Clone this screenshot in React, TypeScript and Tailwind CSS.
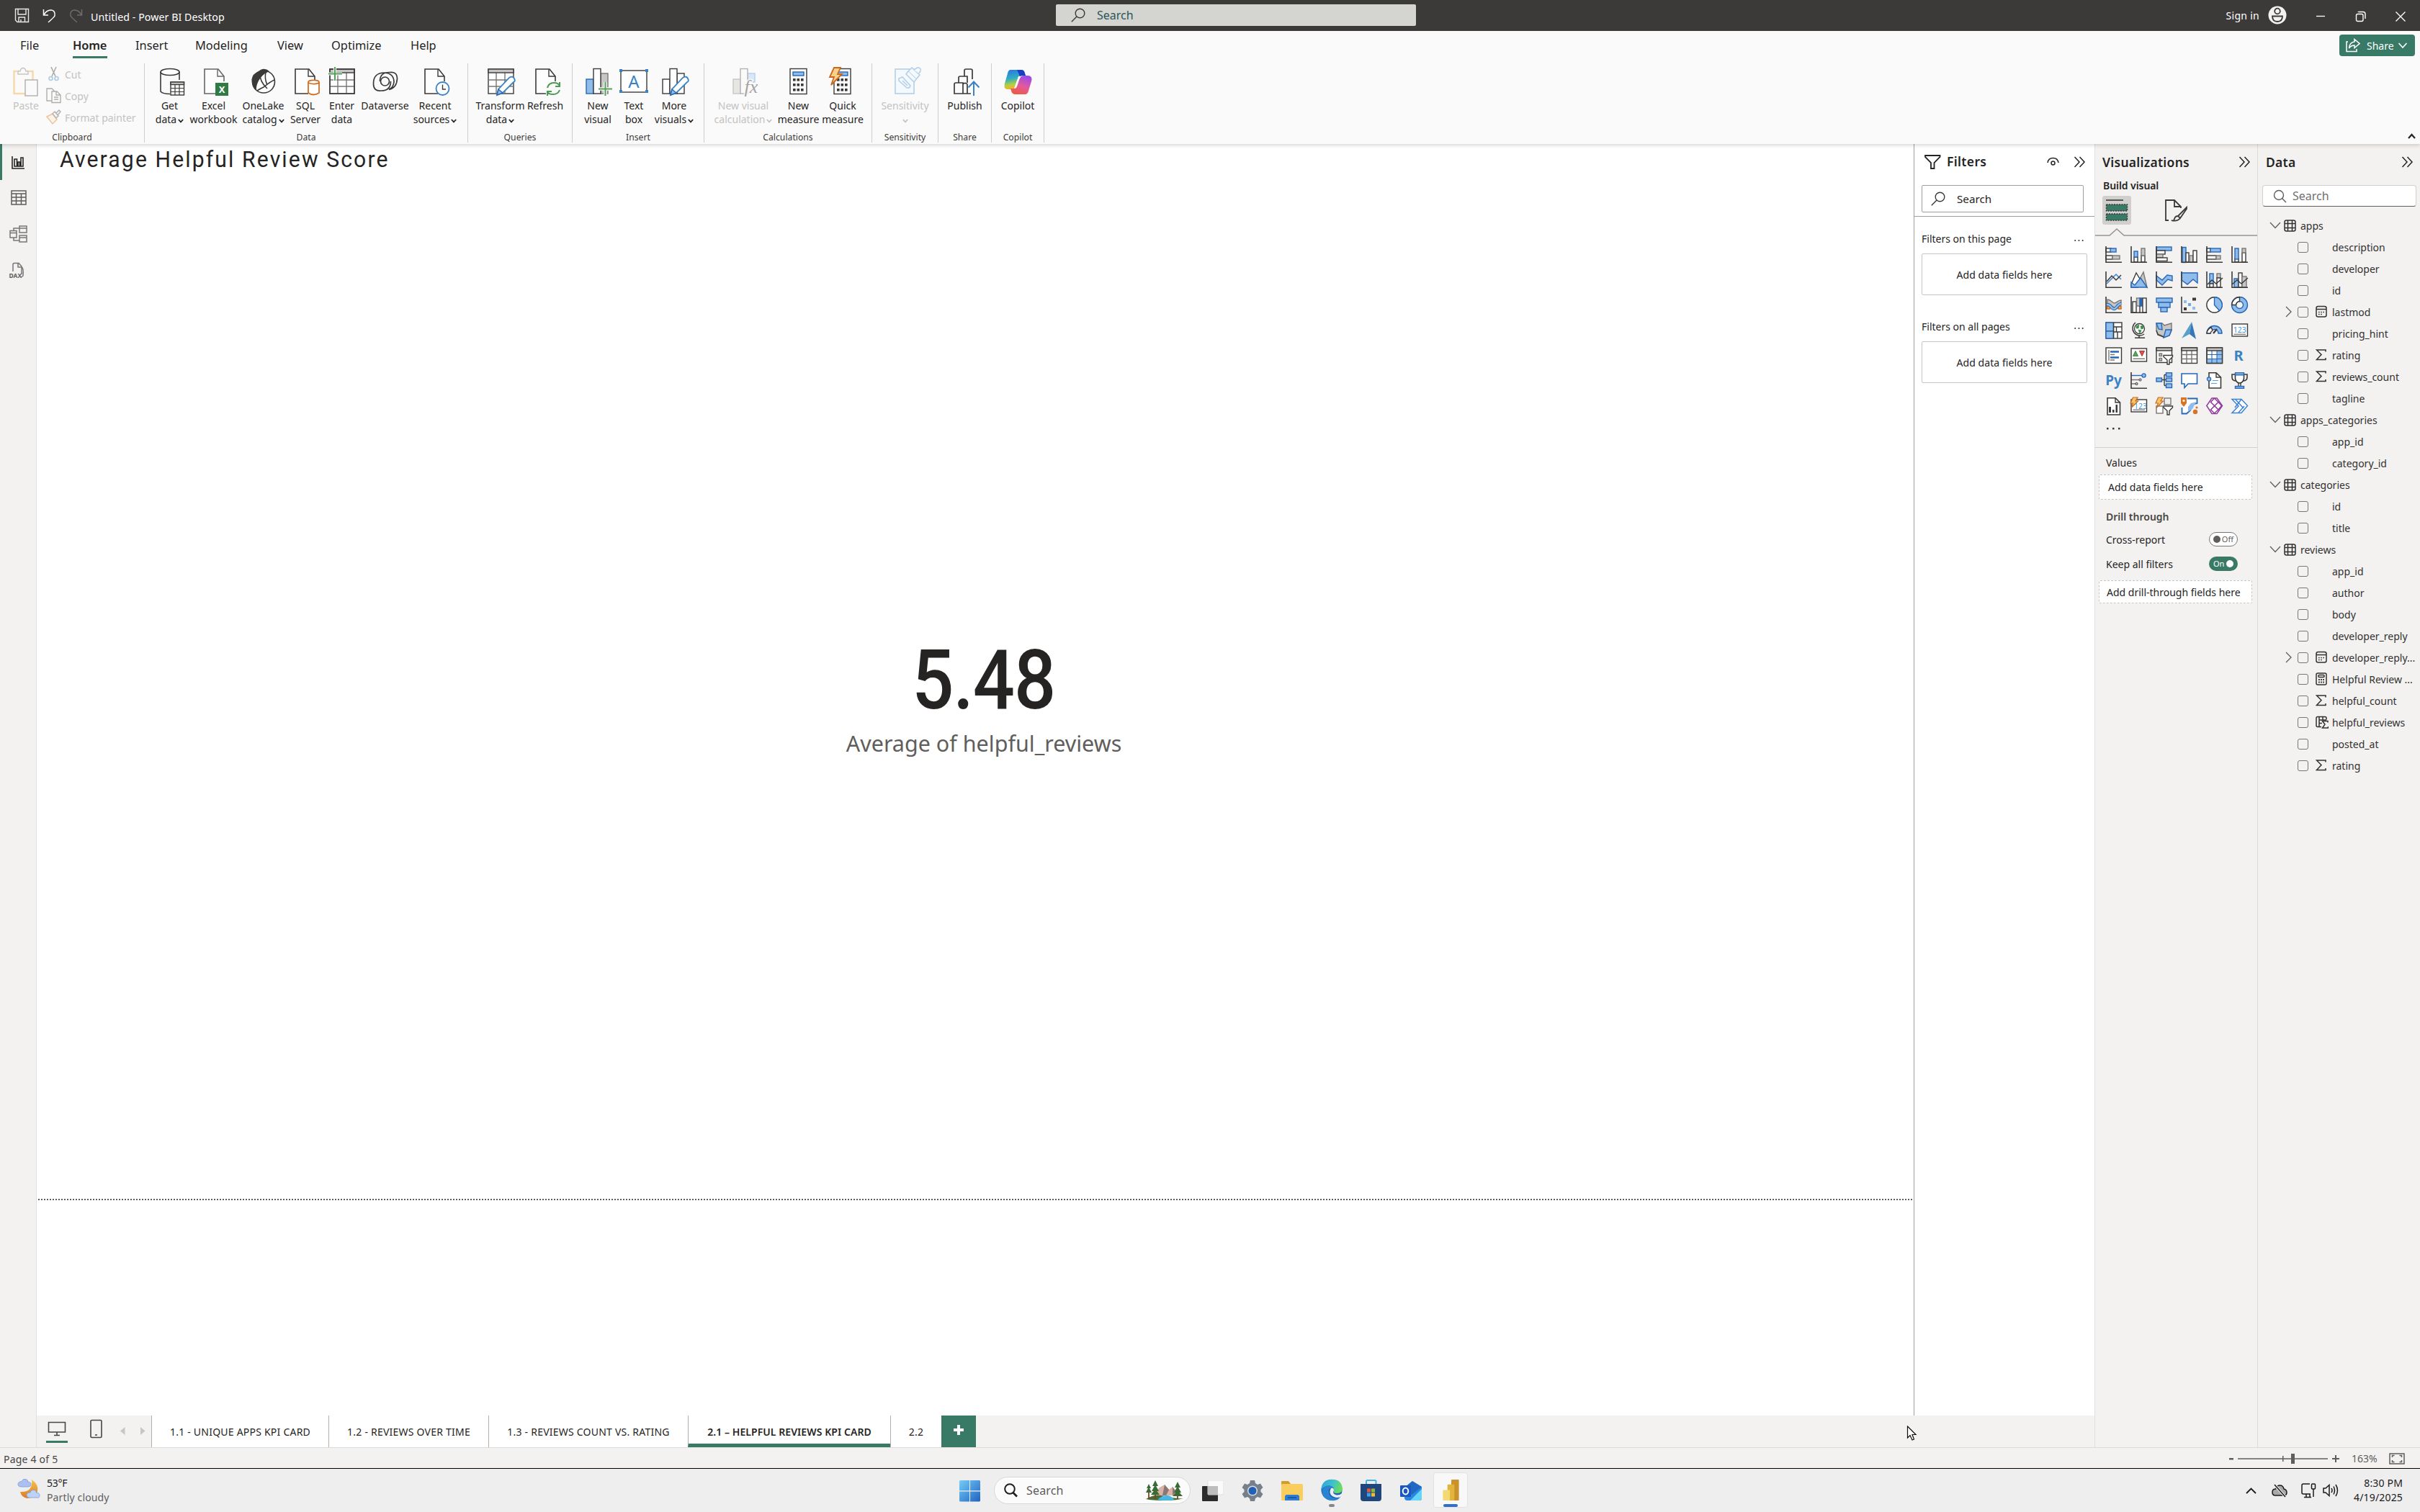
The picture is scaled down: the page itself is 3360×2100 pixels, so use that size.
import React from "react";

const K = "#3b3a39";
const B = "#8fbcea";
const BS = "#2767b5";
const G = "#c8c6c4";
const GS = "#797775";

type BoxProps = { x: number; y: number; w: number; h: number; f?: string; s?: string; sw?: number; rx?: number };
const Bx = ({ x, y, w, h, f = "#fff", s = K, sw = 1.4, rx = 0 }: BoxProps) => (
  <rect x={x} y={y} width={w} height={h} fill={f} stroke={s} strokeWidth={sw} rx={rx} />
);
const P = ({ d, s = K, f = "none", w = 1.4 }: { d: string; s?: string; f?: string; w?: number }) => (
  <path d={d} stroke={s} fill={f} strokeWidth={w} />
);
const Axis = () => <path d="M1 0V22.2H23" fill="none" stroke={K} strokeWidth={1.6} />;

/* ---------- Visual gallery icons, 23 x 23 ---------- */
const vizIcons: React.ReactNode[] = [
  <><Bx x={1} y={3} w={7} h={5} /><Bx x={7} y={3} w={8} h={5} f={B} s={BS} /><Bx x={1} y={13} w={9} h={5} /><Bx x={10} y={13} w={10} h={5} f={G} s={GS} /><Axis /></>,
  <><Bx x={5} y={15} w={5} h={7} /><Bx x={5} y={7} w={5} h={8} f={B} s={BS} /><Bx x={15} y={13} w={5} h={9} /><Bx x={15} y={3} w={5} h={10} f={G} s={GS} /><Axis /></>,
  <><Bx x={1} y={1} w={21} h={5} f={B} s={BS} /><Bx x={1} y={6} w={12} h={5} /><Bx x={1} y={11} w={9} h={5} f={G} s={GS} /><Bx x={1} y={16} w={15} h={4.5} /><Axis /></>,
  <><Bx x={2} y={1.5} w={5} h={21} f={B} s={BS} /><Bx x={7} y={9} w={4} h={13} /><Bx x={12} y={13} w={5} h={9} f={G} s={GS} /><Bx x={17} y={6} w={5} h={16} /><Axis /></>,
  <><Bx x={1} y={3} w={5} h={5} /><Bx x={6} y={3} w={14} h={5} f={B} s={BS} /><Bx x={1} y={13} w={13} h={5} /><Bx x={14} y={13} w={6} h={5} f={G} s={GS} /><Axis /></>,
  <><Bx x={5} y={17} w={5} h={5} /><Bx x={5} y={3} w={5} h={15} f={B} s={BS} /><Bx x={15} y={9} w={5} h={13} /><Bx x={15} y={3} w={5} h={6} f={G} s={GS} /><Axis /></>,

  <><P d="M2 17 15 4 22 11" s="#3f86cf" w={1.5} /><P d="M2 14 9 6 15 12 22 5" w={1.5} /><Axis /></>,
  <><P d="M12 12 18 1 23 22Z" f={G} s={GS} /><P d="M1 18 8 2 17 17 10 22 1 22Z" f="#fff" /><P d="M1 15 6 19 14 9 23 22H1Z" f={B} s={BS} /></>,
  <><P d="M1 6 9 12 16 5 23 6V13L17 11 9 19 1 12Z" f={B} s={BS} /><Axis /></>,
  <><P d="M1 2H23V16L17 11 9 18 1 12Z" f={B} s={BS} /><Axis /></>,
  <><Bx x={5} y={3} w={5} h={14} f={B} s={BS} /><Bx x={5} y={17} w={5} h={5} /><Bx x={15} y={3} w={5} h={6} f={G} s={GS} /><Bx x={15} y={9} w={5} h={13} /><P d="M2 18 8 12 14 17 23 9" /><Axis /></>,
  <><Bx x={4} y={10} w={6} h={12} f={B} s={BS} /><Bx x={10} y={2} w={5} h={20} /><Bx x={15} y={7} w={6} h={15} f={G} s={GS} /><P d="M1 18 8 12 14 17 23 9" /><Axis /></>,

  <><P d="M3 4C8 4 10 9 13 9S17 5 22 5V11C17 11 16 15 13 15S8 10 3 10Z" f={G} s={GS} /><Bx x={2.5} y={13} w={4} h={4} f="#f2a24a" s="#c8691f" /><Bx x={18} y={13} w={4} h={4} f="#f2a24a" s="#c8691f" /><P d="M2 11C8 10 8 17 12 17S17 10 22 10" s={BS} w={4.5} /><P d="M2 11C8 10 8 17 12 17S17 10 22 10" s={B} w={2.4} /><Axis /></>,
  <><Bx x={3} y={7} w={5} h={15} /><Bx x={8.5} y={2} w={5} h={11} f={G} s={GS} /><Bx x={13} y={2} w={3} h={11} f={BS} s={BS} /><Bx x={17} y={2} w={5} h={20} /><P d="M13 13V22" /><Axis /></>,
  <><Bx x={1} y={2} w={22} h={6} f={B} s={BS} /><Bx x={4} y={8} w={16} h={7} f={B} s={BS} /><Bx x={7} y={15} w={9} h={6} f={B} s={BS} /></>,
  <><rect x={4} y={5} width={4} height={4} fill={B} /><rect x={16} y={1.5} width={5} height={4} fill={K} /><rect x={10} y={9} width={4} height={4} fill="#6da7e0" /><rect x={4} y={15} width={4} height={4} fill={K} /><rect x={16} y={14} width={4} height={4} fill={B} /><Axis /></>,
  <><circle cx={11.5} cy={11.5} r={10.7} fill="#fff" stroke={K} strokeWidth={1.4} /><P d="M11.5 .8A10.7 10.7 0 0 1 18.6 19.5L11.5 11.5Z" f={B} s={BS} /></>,
  <><circle cx={11.5} cy={11.5} r={8} fill="none" stroke={BS} strokeWidth={7.4} /><circle cx={11.5} cy={11.5} r={8} fill="none" stroke={B} strokeWidth={4.6} /><P d="M.8 11.5A10.7 10.7 0 0 1 11.5 .8V6.5A5 5 0 0 0 6.5 11.5Z" f="#fff" /></>,

  <><Bx x={1} y={1} w={22} h={22} /><Bx x={1} y={1} w={10.5} h={12} f={B} s={BS} /><Bx x={1} y={13} w={10.5} h={10} f={B} s={BS} /><P d="M11.5 1V23M11.5 7H23M15.5 7V14M11.5 14H23" /><P d="M17 14V23" /></>,
  <><circle cx={12.5} cy={9.5} r={7} fill="#fff" stroke={K} strokeWidth={1.3} /><P d="M8 6 12 4 11 9 8 9ZM14 6 18 5 18 9 15 10ZM11 11 15 12 13 16Z" f="#3f8f4b" s="#3f8f4b" w={0.8} /><P d="M7 1A10 10 0 1 0 19 17M12 19.5V22M6 22.3H20" w={1.5} /></>,
  <><P d="M1 2H9L12 5 22 2V12L19 19 12 21 3 17 1 12Z" f={G} s={GS} /><P d="M1 2H8L9 11 4 10Z" f={B} s={BS} /><P d="M14 11H22L19 19 11 22Z" f={B} s={BS} /><P d="M1 12 3 18 11 21" /></>,
  <><path d="M15 0 1 23 12 17Z" fill="#5a9fca" /><path d="M15 0 21 24 12 17Z" fill="#3577b8" /></>,
  <><P d="M1 16A10.5 10.5 0 0 1 22 16H17A5.5 5.5 0 0 0 6 16Z" f={B} s={BS} /><P d="M1 16A10.5 10.5 0 0 1 7 7.5L9 12A6 6 0 0 0 6 16Z" f="#fff" /><P d="M10 16 15 10" w={2.2} /></>,
  <><Bx x={1} y={3} w={21.5} h={17} /><text x={11.7} y={15} textAnchor="middle" className="font-['Noto_Sans']" fontSize={10.5} fill="#4a94d4">123</text><P d="M3.5 17.3H20" s={GS} w={1.3} /></>,

  <><Bx x={1} y={1} w={21.5} h={21.5} /><P d="M5 4V19" s={GS} /><P d="M7 6.5H19M7 14.5H19" s={BS} w={2.6} /><P d="M7 10.5H13M7 18H13" s={GS} w={1.3} /></>,
  <><Bx x={1} y={2} w={21.5} h={18} /><P d="M3.5 12.5 7 5.5 10.5 12.5Z" f="#5aa55a" s="#3d8a42" w={1} /><P d="M12.5 5.5H19.5L16 12.5Z" f="#e0524a" s="#b5322d" w={1} /><P d="M3.5 16.3H20" s={GS} /></>,
  <><Bx x={1} y={1} w={21.5} h={20.5} /><Bx x={1} y={1} w={21.5} h={4} f={G} /><Bx x={5} y={9} w={3.5} h={3.5} f={G} s={GS} /><Bx x={5} y={15.5} w={3.5} h={3.5} f={G} s={GS} /><P d="M11 11.5H23.5V13.5L19 18V24H16V18L11 13.5Z" f="#fff" /></>,
  <><Bx x={1} y={1} w={21.5} h={21.5} /><P d="M1 10.5H22M1 16.5H22M8 5V22M15 5V22" s={GS} /><Bx x={1} y={1} w={21.5} h={4} f={G} /></>,
  <><Bx x={1} y={1} w={21.5} h={21.5} /><path d="M15 5H22V22H1V16H15Z" fill={B} /><P d="M1 10.5H22M1 16.5H22M8 5V22M15 5V22" s={BS} w={1.1} /><Bx x={1} y={1} w={21.5} h={4} f={G} /><P d="M1 5V22.5H22.5V5" /></>,
  <text x={10} y={19} textAnchor="middle" className="font-['Noto_Sans'] font-bold" fontSize={20} fill="#3b82c4">R</text>,

  <text x={11.5} y={18} textAnchor="middle" className="font-['Noto_Sans'] font-bold" fontSize={19} fill="#3b82c4">Py</text>,
  <><P d="M1 4.5H16" s={BS} /><circle cx={18.5} cy={4.5} r={2.6} fill={B} stroke={BS} strokeWidth={1.3} /><P d="M1 10.5H12M1 16H7" s={GS} /><circle cx={13.5} cy={10.5} r={1.6} fill={G} stroke={K} /><circle cx={8.5} cy={16} r={1.6} fill={G} stroke={K} /><Axis /></>,
  <><P d="M8 10.5H12M12 3.5V18.5M12 3.5H15M12 10.5H15M12 18.5H15" /><Bx x={1} y={8} w={7.5} h={5} f={B} s={BS} /><Bx x={14.5} y={.8} w={8} h={5} f={B} s={BS} /><Bx x={14.5} y={8} w={8} h={5} f={B} s={BS} /><Bx x={14.5} y={16} w={8} h={5.5} f={B} s={BS} /></>,
  <P d="M1 2H22.5V16H10L5 21.5V16H1Z" s={BS} f="#fff" w={1.6} />,
  <><P d="M4 .8H14L20.5 7V22H4Z" f="#fff" w={1.6} /><P d="M14 1V7H20.5" /><circle cx={4} cy={9.5} r={2.6} fill={B} stroke={BS} strokeWidth={1.2} /><P d="M9 11.5H17M7 15.5H15" s="#5d9fdb" w={1.2} /></>,
  <><P d="M6 3H1V7Q1 12 7 12M17 3H22V7Q22 12 16 12" w={1.6} /><P d="M5.5 3H17.5V9Q16 15 11.5 15T5.5 9Z" f="#fff" w={1.6} /><Bx x={5.5} y={.8} w={12} h={3} f={B} s={BS} /><P d="M10 15V19M13 15V19" /><Bx x={5.5} y={19.5} w={12} h={2.8} f={B} s={BS} /></>,

  <><P d="M3 .8H14L20.5 7V24H3Z" f="#fff" w={1.6} /><P d="M14 1V7H20.5" /><path d="M5 13H8V21H5ZM10 17H12.5V21H10ZM14.5 10H17V21H14.5Z" fill={K} /></>,
  <><Bx x={1} y={3} w={21.5} h={17} /><text x={14} y={15.5} textAnchor="middle" className="font-['Noto_Sans']" fontSize={10.5} fill="#4a94d4">123</text><P d="M3.5 17.3H20" s={GS} w={1.3} /><P d="M3.5 0H10L7 5H10.5L1 14.5 3.5 8H0Z" f="#f8c56a" s="#c8691f" w={1.2} /></>,
  <><Bx x={12} y={1} w={9} h={9} f="#eee" s={GS} /><Bx x={1} y={12} w={9} h={10} f="#fff" s={GS} /><P d="M11 12H23.5V14L19 18.5V24H16V18.5L11 14Z" f="#fff" /><P d="M3.5 0H10L7 5H10.5L1 14.5 3.5 8H0Z" f="#f8c56a" s="#c8691f" w={1.2} /></>,
  <><P d="M9 1.5H22.5V8L16 10 13 18 8 22.5H1.5V14" s={BS} f="#fff" w={1.8} /><path d="M22 6 14 8 10 13 10 20 16 16 19 10Z" fill={B} /><path d="M0 0H8V8L4 13 0 8Z" fill="#d97326" /><circle cx={4} cy={4.5} r={1.6} fill="#fff" /><circle cx={20} cy={20} r={3.2} fill="#d97326" /><circle cx={22} cy={14} r={1.6} fill="#d97326" /></>,
  <><P d="M8 1H15L22.5 11.500 15 22.500H8L.8 11.500Z" s="#8e3a9b" w={1.5} f="#fff" /><P d="M11.500 1 6.500 6.500 17 17 11.500 22M11.500 1 17 6.500 6.500 17 11.500 22M17 6.500 21.500 11.500 17 17" s="#8e3a9b" w={1.5} /></>,
  <P d="M1 2.5H14L22.5 11.5 14 21.5H1L10 12ZM5.5 2.5 17 15M14 2.5 5 14M10 21 18 12" s="#3b82d6" w={1.5} f="#fff" />,
];

/* ---------- Ribbon icons; x = 0 is the centre of the button ---------- */
const Doc = ({ x, c = K }: { x: number; c?: string }) => (
  <>
    <P d={`M${x + 27} 20V13L${x + 19} 3H${x}V37H${x + 18}`} s={c} f="#fdfdfd" w={1.6} />
    <P d={`M${x + 18} 3V13H${x + 27}`} s={c} />
  </>
);
const Calc = ({ x }: { x: number }) => (
  <>
    <Bx x={x} y={2.5} w={23} h={35} />
    <Bx x={x + 4} y={7} w={15} h={5} f={B} s={BS} />
    {[17, 24, 31].map((y) => [4, 9.5, 15].map((c) => <rect key={`${y}-${c}`} x={x + c} y={y - 1} width={3.6} height={3.6} fill={K} />))}
  </>
);

const ribbonIcons: Record<string, React.ReactNode> = {
  get: <><P d="M-13 7V34Q-10 37.5 0 37.5" w={1.6} /><P d="M13 7V18" w={1.6} /><ellipse cx={0} cy={7} rx={13} ry={4.5} fill="#fff" stroke={K} strokeWidth={1.6} /><Bx x={1} y={21} w={18.5} h={18} /><P d="M1 29.5H19M1 34.5H19M7 25V39M13 25V39" w={1.2} /><Bx x={1} y={21} w={18.5} h={3.5} f={G} /></>,
  excel: <><Doc x={-13} c="#666" /><rect x={2} y={22} width={18} height={18} fill="#2f7a45" /><text x={11} y={36} textAnchor="middle" className="font-['Noto_Sans'] font-bold" fontSize={13} fill="#fff">X</text></>,
  onelake: <><circle cx={0} cy={20.5} r={15.5} fill="#fff" stroke={K} strokeWidth={1.6} /><path d="M-8 7Q0-1 8 6L2 9Q-6 15-9 24T-7 34Q-17 28-16.500 17Q-15 9-8 7Z" fill={K} /><P d="M-5 8Q-6 20 5 30M15 18Q10 20 0 28Q-8 32-9 33M3 7Q1 16 5 25" w={1.6} /></>,
  sql: <><Doc x={-14} /><P d="M4 21V36Q11 41 19 36V21" s="#d16f22" f="#fff" w={1.8} /><ellipse cx={11.5} cy={21} rx={7.5} ry={2.6} fill="#fff" stroke="#d16f22" strokeWidth={1.6} /></>,
  enter: <><Bx x={-17} y={3} w={34} h={34} /><P d="M-17 18H17M-17 27H17M-6 8V37M6 8V37" s={GS} /><Bx x={-17} y={3} w={34} h={5} f={G} /><Bx x={-17} y={3} w={34} h={34} f="none" /><P d="M-10 0V19M-19 9.500H0" s="#fafafa" w={4} /><P d="M-10 0V19M-19 9.500H0" s="#57a05c" w={2} /></>,
  dataverse: <g fill="none" stroke={K} strokeWidth={1.7}><circle cx={-.5} cy={20} r={6} /><path d="M7.500 20Q7.500 33-6 33-16 34-16.500 24-17 8-1 8 12 9 12 21 11 29 5 31M-7.500 20Q-7.500 7 6 7.500 16 6 16.500 16 16 29 5 31.500" /></g>,
  recent: <><Doc x={-14} /><circle cx={10.500} cy={30} r={9} fill="#fff" stroke="#3b82c4" strokeWidth={1.800} /><P d="M10.500 24.500V31H15" /></>,
  transform: <><Bx x={-17} y={3} w={35} h={34} /><P d="M-17 18H18M-17 27H18M-6 8V37M6 8V37" s={GS} /><Bx x={-17} y={3} w={35} h={5} f={G} /><P d="M-5 39 -3 31 12 15Q17 12 19 16T18 21L3 36Z" f="#fff" s="#3b82c4" w={1.800} /><P d="M-5 39 -3 31 3 36Z" f={B} s={BS} /></>,
  refresh: <><Doc x={-13} /><rect x={1} y={20} width={21} height={21} fill="#fafafa" /><P d="M3 29Q5 22 12 22T20 27M20 21V27H14M20 32Q18 38 11 38T3 34M3 40V34H9" s="#4f9a55" w={2} /></>,
  newvisual: <><Bx x={-16} y={17} w={10} h={20} f={B} s={BS} /><Bx x={4} y={9} w={10} h={28} f={G} s={GS} /><Bx x={-6} y={2.500} w={10} h={34.500} /><P d="M10.500 21V40M1 30.500H20" s="#fafafa" w={4.500} /><P d="M10.500 21V40M1 30.500H20" s="#57a05c" w={2} /></>,
  textbox: <><Bx x={-18} y={5} w={36} h={30} /><text x={0} y={29} textAnchor="middle" className="font-['Noto_Sans']" fontSize={24} fill="#3b82c4">A</text>{[[-20, 3], [16, 3], [-20, 32], [16, 32]].map(([x, y]) => <rect key={`${x}${y}`} x={x} y={y} width={4} height={4} fill="#3b82c4" />)}</>,
  morevisuals: <><Bx x={-16} y={17} w={10} h={20} /><Bx x={4} y={9} w={10} h={28} /><Bx x={-6} y={2.500} w={10} h={34.500} /><P d="M-5 39 -3 31 12 15Q17 12 19 16T18 21L3 36Z" f="#fff" s="#3b82c4" w={1.800} /><P d="M-5 39 -3 31 3 36Z" f={B} s={BS} /></>,
  visualcalc: <><Bx x={-14} y={17} w={10} h={20} f="#e6e6e5" s={G} /><Bx x={6} y={9} w={10} h={12} f="#d8e8f8" s="#b5cfea" /><Bx x={-4} y={2.500} w={10} h={34.500} s="#b5b3b1" f="#fafafa" /><text x={11} y={36} textAnchor="middle" className="font-['Liberation_Serif'] italic" fontSize={26} fill="#a5a3a1" stroke="#fafafa" strokeWidth={3} paintOrder="stroke">fx</text></>,
  newmeasure: <Calc x={-12} />,
  quickmeasure: <><Calc x={-12} /><P d="M-12 1H-3L-7 10H-1L-16 25-12 14H-18Z" f="#f8d08a" s="#c8691f" w={1.800} /></>,
  sensitivity: <g fill="#f4f9fd" stroke="#b3d0e8" strokeWidth={1.600}><rect x={-14} y={3} width={26} height={34} /><path d="M-9 16-4 14 7 26Q6 30 2 29L-9 19ZM-4 19 3 26" /><path d="M4 6 9 1 20 11 15 17Z" /><path d="M4 6 1 10 12 21 15 17M12 4 18 0 22 4 19 9" /></g>,
  publish: <><P d="M-15 37V24Q-15 22-13 22H-3V37ZM-9 22V15Q-9 13-7 13H3V22M-1 13V5Q-1 3 1 3H8Q10 3 10 5V17M-3 24Q0 21 3 24V37H-3M3 37H8" w={1.700} /><P d="M12 40V21M4.500 28.500 12 20.500 19.500 28.500" s="#3b82c4" w={2} /></>,
  copilot: (
    <>
      <defs>
        <linearGradient id="cpA" x1="0" y1="0" x2="0.2" y2="1"><stop offset="0" stopColor="#2a72e8" /><stop offset=".5" stopColor="#2fb0c0" /><stop offset=".8" stopColor="#b9cf3b" /><stop offset="1" stopColor="#f2b02e" /></linearGradient>
        <linearGradient id="cpB" x1="0.6" y1="0" x2="0.2" y2="1"><stop offset="0" stopColor="#a04be8" /><stop offset=".5" stopColor="#e25a9c" /><stop offset="1" stopColor="#ee5a36" /></linearGradient>
      </defs>
      <path d="M-10 4H5Q9 4 10 9L11 12H6Q1 12 0 17L-4 29Q-5 31-9 31H-14Q-20 31-18 23L-14 9Q-13 4-10 4Z" fill="url(#cpA)" />
      <path d="M-1 4H5Q9 4 10 9L11 12H6L3 13Z" fill="#1b3fc4" />
      <path d="M10 38H-3Q-8 38-9 33L-10 30H-7Q-2 30-1 25L3 15Q4 12 9 12H14Q21 12 19 20L15 33Q14 38 10 38Z" fill="url(#cpB)" />
      <path d="M1 13H5Q3 15 2 18L-1 27Q-2 30-5 30Z" fill="#fff" />
    </>
  ),
};

const Caret = ({ className = "" }: { className?: string }) => (
  <svg className={`inline-block ${className}`} width="8" height="6" viewBox="0 0 8 6"><path d="M.8 1 4 4.400 7.200 1" fill="none" stroke="currentColor" strokeWidth="1.800" /></svg>
);

type Btn = { icon: string; a: string; b?: string; caret?: boolean; w: string; off?: boolean };
const RibbonButton = ({ icon, a, b, caret, w, off }: Btn) => (
  <div className={`flex shrink-0 flex-col items-center ${w} ${off ? "text-[#c3c2c1]" : "text-[#252423]"}`}>
    <svg width="44" height="42" viewBox="-22 0 44 42" className="shrink-0">{ribbonIcons[icon]}</svg>
    <div className="mt-[2px] text-[14px] leading-[20px] whitespace-nowrap">{a}</div>
    <div className="-mt-px flex h-[20px] items-center gap-[2px] text-[14px] leading-[20px] whitespace-nowrap">{b}{caret && <Caret className="mt-[3px]" />}</div>
  </div>
);
const Group = ({ name, w, children, pad = "" }: { name: string; w: string; children: React.ReactNode; pad?: string }) => (
  <div className={`flex h-[110px] shrink-0 flex-col border-r border-[#cfcecd] ${w}`}>
    <div className={`flex h-[94px] shrink-0 pt-[5px] ${pad}`}>{children}</div>
    <div className="text-center text-[12.200px] leading-[18px] text-[#3b3a39]">{name}</div>
  </div>
);

const Chevrons = () => (
  <svg width="17" height="16" viewBox="0 0 17 16" fill="none" stroke="#252423" strokeWidth="1.500"><path d="M1.500 1 8 8 1.500 15M8.500 1 15 8 8.500 15" /></svg>
);
const Lens = ({ c = "#3b3a39", s = 20 }: { c?: string; s?: number }) => (
  <svg width={s} height={s} viewBox="0 0 20 20" fill="none" stroke={c} strokeWidth="1.400"><circle cx="12.500" cy="7.500" r="6.300" /><path d="M8 12 .8 19.200" /></svg>
);

/* ---------- Data pane ---------- */
type Field = { t: string; icon?: "sum" | "date" | "calc" | "calcsum"; open?: boolean };
const tables: { name: string; fields: Field[] }[] = [
  { name: "apps", fields: [{ t: "description" }, { t: "developer" }, { t: "id" }, { t: "lastmod", icon: "date", open: true }, { t: "pricing_hint" }, { t: "rating", icon: "sum" }, { t: "reviews_count", icon: "sum" }, { t: "tagline" }] },
  { name: "apps_categories", fields: [{ t: "app_id" }, { t: "category_id" }] },
  { name: "categories", fields: [{ t: "id" }, { t: "title" }] },
  { name: "reviews", fields: [{ t: "app_id" }, { t: "author" }, { t: "body" }, { t: "developer_reply" }, { t: "developer_reply...", icon: "date", open: true }, { t: "Helpful Review ...", icon: "calc" }, { t: "helpful_count", icon: "sum" }, { t: "helpful_reviews", icon: "calcsum" }, { t: "posted_at" }, { t: "rating", icon: "sum" }] },
];
const fieldIcons = {
  sum: <path d="M14 4V1.500H1.500L8 8 1.500 15H14V12.500" />,
  date: <><rect x="1" y="1" width="14" height="14.500" rx="2.500" /><path d="M1 5H15" /><path d="M4 9H12M4 12H9" strokeDasharray="1.600 1.600" strokeWidth="1.600" /></>,
  calc: <><rect x="1" y=".5" width="14" height="16" rx="2" /><rect x="4" y="3" width="8" height="3" rx="1" /><path d="M4 9.500H12M4 13H12" strokeDasharray="1.800 1.300" strokeWidth="2" /></>,
  calcsum: <><path d="M8 15H3Q1 15 1 13V3Q1 1 3 1H13Q15 1 15 3V5M5 1V15M10 1V6M5 5.500H15M5 10H9" /><path d="M17 9V7H9.500L13 11.500 9.500 16.500H17.500V14.500" /></>,
};

const FilterSection = ({ name }: { name: string }) => (
  <>
    <div className="flex h-[20px] items-center justify-between pr-[13px] pl-[10px] text-[14px] text-[#252423]">
      <span>{name}</span>
      <span className="-mt-1 tracking-[1.500px]">...</span>
    </div>
    <div className="mt-[11px] ml-[10px] flex h-[58px] w-[230px] items-center justify-center rounded-[2px] border border-[#c8c6c4] pt-px text-[14px] tracking-[0.005em] text-[#252423]">Add data fields here</div>
  </>
);

const Toggle = ({ on }: { on?: boolean }) =>
  on ? (
    <div className="flex h-[20px] w-[40px] items-center justify-between rounded-full bg-[#397a67] pr-[6px] pl-[6px] text-[11px] text-white"><span>On</span><span className="size-[10px] rounded-full bg-white" /></div>
  ) : (
    <div className="flex h-[20px] w-[40px] items-center justify-between rounded-full border border-[#797775] bg-white pr-[5px] pl-[5px] text-[11px] text-[#605e5c]"><span className="size-[10px] rounded-full bg-[#605e5c]" /><span>Off</span></div>
  );

const tabs = [
  { t: "1.1 - UNIQUE APPS KPI CARD", w: "w-[246px]" },
  { t: "1.2 - REVIEWS OVER TIME", w: "w-[222px]" },
  { t: "1.3 - REVIEWS COUNT VS. RATING", w: "w-[277px]" },
  { t: "2.1 – HELPFUL REVIEWS KPI CARD", w: "w-[281px]", active: true },
  { t: "2.2", w: "w-[71px]" },
];

const menu = [
  { t: "File", w: "w-[81px]", p: "pl-[28px]" },
  { t: "Home", w: "w-[87px]", p: "pl-[20px]", active: true },
  { t: "Insert", w: "w-[83px]", p: "pl-[20px]" },
  { t: "Modeling", w: "w-[114px]", p: "pl-[20px]" },
  { t: "View", w: "w-[75px]", p: "pl-[20px]" },
  { t: "Optimize", w: "w-[110px]", p: "pl-[20px]" },
  { t: "Help", w: "w-[80px]", p: "pl-[20px]" },
];

const TitleBar = () => (
  <div className="flex h-[43px] shrink-0 items-start bg-[#3b3a38] text-white">
    <div className="flex w-[1466px] items-start">
      <svg className="mt-[11px] ml-[20px]" width="21" height="21" viewBox="0 0 21 21" fill="none" stroke="#e8e8e8" strokeWidth="1.400"><path d="M1.500 1.500H19.500V19.500H4L1.500 17ZM5 1.500V9H16V1.500M6 19.500V13H14.500V19.500M9 19V16" /></svg>
      <svg className="mt-[12px] ml-[18px]" width="20" height="20" viewBox="0 0 20 20" fill="none" stroke="#fff" strokeWidth="1.500"><path d="M1.500 1V9H8M1.500 9Q6 1.500 12 2T17 10Q16 12 8 19" /></svg>
      <svg className="mt-[12px] ml-[16px]" width="20" height="20" viewBox="0 0 20 20" fill="none" stroke="#6f6d6a" strokeWidth="1.500"><path d="M18.500 1V9H12M18.500 9Q14 1.500 8 2T3 10Q4 12 12 19" /></svg>
      <span className="mt-[14px] ml-[11px] text-[14.200px] leading-[20px] tracking-[0.005em]">Untitled - Power BI Desktop</span>
    </div>
    <div className="mt-[6px] flex h-[30px] w-[500px] items-center rounded-[2px] bg-[#d4d4d1] pl-[21px]">
      <Lens />
      <span className="ml-[16px] text-[16px] text-[#2b5656]">Search</span>
    </div>
    <div className="flex flex-1 justify-end">
      <span className="mt-[12px] text-[14px] leading-[20px] tracking-[0.02em]">Sign in</span>
      <svg className="mt-[8px] ml-[12px]" width="26" height="26" viewBox="0 0 26 26"><circle cx="13" cy="13" r="12.500" fill="#f3f2f1" /><circle cx="13" cy="7.500" r="3.800" fill="none" stroke="#3b3a38" strokeWidth="1.800" /><path d="M6 14.500H20Q20 22 13 22T6 14.500Z" fill="none" stroke="#3b3a38" strokeWidth="1.800" /></svg>
      <svg className="mt-[14px] ml-[39px]" width="16" height="16" viewBox="0 0 16 16"><path d="M2 8.500H14" stroke="#fff" strokeWidth="1.300" /></svg>
      <svg className="mt-[14px] ml-[40px]" width="16" height="18" viewBox="0 0 16 18" fill="none" stroke="#fff" strokeWidth="1.400"><rect x="1.500" y="5.500" width="9.500" height="10" rx="2" /><path d="M4 3Q4 2.500 6 2.500H11Q14 2.500 14 5.500V12" /></svg>
      <svg className="mt-[15px] mr-[19px] ml-[39px]" width="16" height="16" viewBox="0 0 16 16"><path d="M1.500 1.500 14.500 14.500M14.500 1.500 1.500 14.500" stroke="#fff" strokeWidth="1.400" /></svg>
    </div>
  </div>
);

const Ribbon = () => (
  <div className="relative z-10 h-[157px] shrink-0 bg-[#fafafa] shadow-[0_2px_5px_rgba(0,0,0,0.16)]">
    <div className="flex h-[45px] justify-between">
      <div className="flex text-[16.400px] text-[#252423]">
        {menu.map((m) => (
          <div key={m.t} className={`flex ${m.w} ${m.p}`}>
            <div className={`h-[38px] pt-[8px] leading-[24px] ${m.active ? "w-[48px] border-b-[3px] border-[#397a67] font-semibold tracking-[-0.01em]" : ""}`}>{m.t}</div>
          </div>
        ))}
      </div>
      <div className="mt-[5px] mr-[7px] flex h-[30px] w-[105px] items-center rounded-[4px] bg-[#397a67] pl-[9px] text-white">
        <svg width="20" height="20" viewBox="0 0 20 20" fill="none" stroke="#fff" strokeWidth="1.500"><path d="M3 5H1V18.500H15V15" /><path d="M12 1.500 19 7.500 12 13.500V10Q7 10 4.500 14Q5 6 12 5Z" /></svg>
        <span className="ml-[9px] text-[14px]">Share</span>
        <svg className="ml-[5px]" width="14" height="9" viewBox="0 0 14 9"><path d="M1.500 1 7 7 12.500 1" fill="none" stroke="#fff" strokeWidth="1.600" /></svg>
      </div>
    </div>
    <div className="flex">
      <Group name="Clipboard" w="w-[201px]">
        <div className="flex w-[64px] flex-col items-center pl-[8px] text-[#c3c2c1]">
          <svg width="36" height="42" viewBox="0 0 36 42"><Bx x={1.500} y={6} w={26} h={31} f="#fbfaf8" s="#f5d9ac" sw={2.400} /><P d="M7 10V6H10Q11 1.500 14 1.500T18 6H21V10Z" s={G} f="#fafafa" /><Bx x={17} y={18} w={17} h={22} f="#fafafa" s="#b0aeac" /></svg>
          <span className="mt-[2px] text-[14px] leading-[20px]">Paste</span>
        </div>
        <div className="text-[14px] text-[#c3c2c1]">
          <div className="flex h-[20px] items-center gap-[5px]">
            <svg width="21" height="22" viewBox="0 0 21 22" fill="none"><path d="M7 1 13 14M14 1 8 14" stroke="#a9a7a5" strokeWidth="1.500" /><circle cx="6.500" cy="17" r="2.500" stroke="#a9c9e4" strokeWidth="1.500" /><circle cx="14.500" cy="17" r="2.500" stroke="#a9c9e4" strokeWidth="1.500" /></svg>Cut
          </div>
          <div className="mt-[10px] flex h-[20px] items-center gap-[5px]">
            <svg width="21" height="22" viewBox="0 0 21 22" fill="none" stroke="#b0aeac" strokeWidth="1.400"><path d="M8 18H1V1H8L11 4V5M8 5H15L20 10V20.500H8ZM14 5V10H20M11 13H17M11 16H17" /></svg>Copy
          </div>
          <div className="mt-[10px] flex h-[20px] items-center gap-[5px]">
            <svg width="21" height="22" viewBox="0 0 21 22" fill="none" strokeWidth="1.500"><path d="M1 10 9 6 15 14 9 20Z" stroke="#ecc39a" fill="#fcf3e8" /><path d="M9 6 12 3 17 9 14 12ZM14 5 18 1 20 3 16 8" stroke="#b5b3b1" fill="#fafafa" /></svg><span>Format painter</span>
          </div>
        </div>
      </Group>
      <Group name="Data" w="w-[449px]" pad="pl-[7px]">
        <RibbonButton icon="get" a="Get" b="data" caret w="w-[55px]" />
        <RibbonButton icon="excel" a="Excel" b="workbook" w="w-[67px]" />
        <RibbonButton icon="onelake" a="OneLake" b="catalog" caret w="w-[71px]" />
        <RibbonButton icon="sql" a="SQL" b="Server" w="w-[46px]" />
        <RibbonButton icon="enter" a="Enter" b="data" w="w-[55px]" />
        <RibbonButton icon="dataverse" a="Dataverse" w="w-[65px]" />
        <RibbonButton icon="recent" a="Recent" b="sources" caret w="w-[74px]" />
      </Group>
      <Group name="Queries" w="w-[145px]" pad="pl-[10px]">
        <RibbonButton icon="transform" a="Transform" b="data" caret w="w-[69px]" />
        <RibbonButton icon="refresh" a="Refresh" w="w-[56px]" />
      </Group>
      <Group name="Insert" w="w-[183px]" pad="pl-[7px]">
        <RibbonButton icon="newvisual" a="New" b="visual" w="w-[56px]" />
        <RibbonButton icon="textbox" a="Text" b="box" w="w-[44px]" />
        <RibbonButton icon="morevisuals" a="More" b="visuals" caret w="w-[68px]" />
      </Group>
      <Group name="Calculations" w="w-[233px]" pad="pl-[9px]">
        <RibbonButton icon="visualcalc" a="New visual" b="calculation" caret w="w-[90px]" off />
        <RibbonButton icon="newmeasure" a="New" b="measure" w="w-[63px]" />
        <RibbonButton icon="quickmeasure" a="Quick" b="measure" w="w-[60px]" />
      </Group>
      <Group name="Sensitivity" w="w-[92px]"><RibbonButton icon="sensitivity" a="Sensitivity" caret w="w-[91px]" off /></Group>
      <Group name="Share" w="w-[74px]"><RibbonButton icon="publish" a="Publish" w="w-[73px]" /></Group>
      <Group name="Copilot" w="w-[73px]"><RibbonButton icon="copilot" a="Copilot" w="w-[72px]" /></Group>
      <div className="flex flex-1 items-end justify-end pr-[6px] pb-[5px]">
        <svg width="11" height="8" viewBox="0 0 11 8"><path d="M1 7 5.500 2 10 7" fill="none" stroke="#252423" strokeWidth="2.200" /></svg>
      </div>
    </div>
  </div>
);

const Rail = () => (
  <div className="flex w-[51px] shrink-0 flex-col border-r border-[#e1dfdd] bg-[#f3f2f1]">
    <div className="flex h-[50px] items-center border-l-[3px] border-[#397a67] pt-[2px] pl-[13px]">
      <svg width="19" height="18" viewBox="0 0 19 18" fill="none" stroke="#252423" strokeWidth="1.600"><path d="M1 0V17H18M4 4H7.500V14H4ZM9 8H11.500V14H9ZM13 2H16V14H13Z" /></svg>
    </div>
    <svg className="mt-[14px] ml-[15px]" width="22" height="21" viewBox="0 0 22 21" fill="none" stroke="#605e5c" strokeWidth="1.500"><path d="M1 1H21V20H1ZM1 5H21M1 10H21M1 15H21M7.500 5V20M14.500 5V20" /></svg>
    <svg className="mt-[28px] ml-[13px]" width="25" height="24" viewBox="0 0 25 24" fill="none" stroke="#797775" strokeWidth="1.500"><path d="M1 7.500H10V17H1ZM1 10.500H10M14 1H24V10H14ZM14 4H24M14 14H24V23H14ZM14 17H24M6 7V4H14M6 17V21H14" /></svg>
    <svg className="mt-[27px] ml-[12px]" width="25" height="24" viewBox="0 0 25 24"><path d="M6 13V3.500Q6 1.500 8 1.500H14L18 6V17M13 2V7H18M18 7Q21 8 20 19L17 21" fill="none" stroke="#797775" strokeWidth="1.500" /><text x=".5" y="21.500" className="font-['Noto_Sans'] font-bold" fontSize="8.500" fill="#605e5c">DAX</text></svg>
  </div>
);

const Canvas = () => (
  <div className="flex w-[2606px] shrink-0 flex-col bg-white">
    <h1 className="mt-[1px] ml-[32px] h-[40px] origin-left scale-x-[0.94] font-['Roboto'] text-[32px] leading-[40px] tracking-[0.071em] text-[#252423]">Average Helpful Review Score</h1>
    <div className="mt-[644px] ml-[13px] flex h-[581px] w-[2604px] flex-col items-center">
      <div className="scale-x-[0.89] font-['Roboto'] text-[115px] leading-[120px] font-medium tracking-[-0.01em] text-[#252423]">5.48</div>
      <div className="mt-[7px] text-[30.500px] leading-[40px] text-[#605e5c]">Average of helpful_reviews</div>
    </div>
    <div className="mt-[199px] ml-[2px] w-[2602px] border-t-2 border-dotted border-[#605e5c]" />
  </div>
);

const Filters = () => (
  <div className="w-[251px] shrink-0 border-l border-[#a19f9d] bg-white">
    <div className="flex h-[57px] items-center pb-[8px] pl-[14px]">
      <svg width="23" height="20" viewBox="0 0 23 20"><path d="M1 1H21.500V3L13.500 11V19H9V11L1 3Z" fill="none" stroke="#252423" strokeWidth="1.800" /></svg>
      <span className="ml-[8px] text-[17.500px] font-semibold tracking-[0.02em] text-[#252423]">Filters</span>
      <svg className="ml-auto" width="17" height="14" viewBox="0 0 17 14" fill="none" stroke="#252423" strokeWidth="1.500"><path d="M1 8Q2 1.500 8.500 1.500T16 8" /><circle cx="8.500" cy="8.500" r="2.500" /></svg>
      <div className="mr-[12px] ml-[20px]"><Chevrons /></div>
    </div>
    <div className="ml-[10px] flex h-[38px] w-[225px] items-center rounded-[2px] border border-[#a19f9d] pl-[12px]">
      <Lens />
      <span className="ml-[16px] text-[15.200px] text-[#252423]">Search</span>
    </div>
    <div className="mt-[5px] mb-[20px] h-px bg-[#a19f9d]" />
    <FilterSection name="Filters on this page" />
    <div className="h-[33px]" />
    <FilterSection name="Filters on all pages" />
  </div>
);

const Visualizations = () => (
  <div className="flex w-[226px] shrink-0 flex-col border-l border-[#e1dfdd] bg-[#f3f2f1] text-[14px] text-[#252423]">
    <div className="flex h-[50px] items-center justify-between pr-[9px] pl-[10px]">
      <span className="text-[17.500px] font-semibold tracking-[0.015em]">Visualizations</span><Chevrons />
    </div>
    <div className="pl-[11px] text-[14px] leading-[16px] font-semibold tracking-[-0.005em]">Build visual</div>
    <div className="mt-[6px] flex pl-[10px]">
      <div className="flex size-[40px] items-center justify-center rounded-[3px] bg-[#d0cfcd]">
        <svg width="32" height="32" viewBox="0 0 32 32"><path d="M1 2H25" stroke={K} strokeWidth="1.600" /><rect x="1.500" y="8" width="29" height="9" fill="#397a67" stroke={K} strokeWidth="1.500" strokeDasharray="2 1.500" /><rect x="1.500" y="21" width="29" height="9" fill="#397a67" stroke={K} strokeWidth="1.500" strokeDasharray="2 1.500" /></svg>
      </div>
      <svg className="mt-[4px] ml-[46px]" width="34" height="34" viewBox="0 0 34 34" fill="none" stroke={K} strokeWidth="1.800"><path d="M6 30H2V2H14L23 11V13M14 2V11H23" /><path d="M31 12 19 24 22 27 31 14ZM19 24Q15 24 14 28T10 30Q18 32 22 27" /></svg>
    </div>
    <svg className="mt-[4px] shrink-0" width="225" height="13" viewBox="0 0 225 13"><path d="M0 11H20L30 2 40 11H225" fill="none" stroke="#979593" strokeWidth="1.600" /></svg>
    <div className="mt-[13px] ml-[14px] grid w-[210px] grid-cols-6 gap-y-[11px]">
      {vizIcons.map((icon, i) => (
        <svg key={i} width="25" height="24" viewBox="0 0 25 24" className="overflow-visible">{icon}</svg>
      ))}
    </div>
    <svg className="mt-[10px] ml-[15px] shrink-0" width="22" height="20" viewBox="0 0 22 20" fill={K}><rect x="1" y="8" width="2.500" height="2.500" /><rect x="9" y="8" width="2.500" height="2.500" /><rect x="17" y="8" width="2.500" height="2.500" /></svg>
    <div className="mt-[15px] h-px shrink-0 bg-[#d2d0ce]" />
    <div className="mt-[11px] pl-[15px] leading-[20px]">Values</div>
    <div className="mt-[6px] ml-[5px] flex h-[35px] w-[213px] items-center rounded-[2px] border border-dashed border-[#c8c6c4] bg-white pl-[12px]">Add data fields here</div>
    <div className="mt-[14px] pl-[15px] leading-[20px] font-semibold text-[#484644]">Drill through</div>
    <div className="mt-[11px] flex h-[20px] items-center justify-between pr-[27px] pl-[15px]">Cross-report<Toggle /></div>
    <div className="mt-[14px] flex h-[20px] items-center justify-between pr-[27px] pl-[15px]">Keep all filters<Toggle on /></div>
    <div className="mt-[13px] ml-[5px] flex h-[32px] w-[213px] items-center rounded-[2px] border border-dashed border-[#c8c6c4] bg-white pl-[10px] whitespace-nowrap">Add drill-through fields here</div>
  </div>
);

const DataPane = () => (
  <div className="w-[226px] shrink-0 border-l border-[#dddbd9] bg-[#f3f2f1] text-[14px] text-[#323130]">
    <div className="flex h-[50px] items-center justify-between pr-[9px] pl-[11px]">
      <span className="text-[17.500px] font-semibold tracking-[0.015em] text-[#252423]">Data</span><Chevrons />
    </div>
    <div className="mt-[7px] ml-[6px] flex h-[30px] w-[214px] items-center rounded-[4px] border border-[#d2d0ce] border-b-[#605e5c] bg-white pl-[14px]">
      <svg width="19" height="19" viewBox="0 0 19 19" fill="none" stroke="#605e5c" strokeWidth="1.400"><circle cx="8" cy="8" r="6.500" /><path d="M12.500 12.500 18 18" /></svg>
      <span className="ml-[8px] text-[16px] text-[#707070]">Search</span>
    </div>
    <div className="mt-[11px]">
      {tables.map((t) => (
        <div key={t.name}>
          <div className="flex h-[30px] items-center pl-[16px]">
            <svg width="16" height="10" viewBox="0 0 16 10"><path d="M1 1 8 8.500 15 1" fill="none" stroke="#605e5c" strokeWidth="1.300" /></svg>
            <svg className="ml-[4px]" width="17" height="17" viewBox="0 0 17 17" fill="none" stroke="#323130" strokeWidth="1.500"><rect x="1" y="1" width="15" height="15" rx="2.500" /><path d="M5.500 1V16M11.500 1V16M1 5.500H16M1 11.500H16" /></svg>
            <span className="ml-[6px]">{t.name}</span>
          </div>
          {t.fields.map((f) => (
            <div key={f.t} className="flex h-[30px] items-center pl-[37px] whitespace-nowrap">
              <svg width="11" height="16" viewBox="0 0 11 16" className="shrink-0">{f.open && <path d="M2 1 9 8 2 15" fill="none" stroke="#605e5c" strokeWidth="1.300" />}</svg>
              <span className="ml-[7px] size-[15px] shrink-0 rounded-[3px] border border-[#797775]" />
              <svg className="ml-[10px] shrink-0" width="18" height="18" viewBox="0 0 18 17" fill="none" stroke="#323130" strokeWidth="1.500">{f.icon && fieldIcons[f.icon]}</svg>
              <span className="ml-[5px]">{f.t}</span>
            </div>
          ))}
        </div>
      ))}
    </div>
  </div>
);

const TabStrip = () => (
  <div className="flex h-[44px] shrink-0 bg-[#f3f2f1] text-[14px] text-[#252423]">
    <div className="flex w-[159px] items-start">
      <div className="ml-[13px] flex h-[38px] w-[30px] flex-col items-center justify-between border-b-[3px] border-[#397a67] pt-[8px]">
        <svg width="26" height="21" viewBox="0 0 26 21" fill="none" stroke="#484644" strokeWidth="1.600"><path d="M1.500 1.500H24.500V15H1.500ZM13 15V19M9 19.500H17" /></svg>
      </div>
      <svg className="mt-[5px] ml-[31px]" width="17" height="27" viewBox="0 0 17 27" fill="none" stroke="#484644" strokeWidth="1.600"><rect x="1" y="1.500" width="15" height="24" rx="1.500" /><path d="M7 22H10" /></svg>
      <svg className="mt-[16px] ml-[25px]" width="7" height="11" viewBox="0 0 7 11" fill="#c8c6c4"><path d="M6.500 0V11L0 5.500Z" /></svg>
      <svg className="mt-[16px] ml-[21px]" width="7" height="11" viewBox="0 0 7 11" fill="#c8c6c4"><path d="M0 0V11L6.500 5.500Z" /></svg>
    </div>
    {tabs.map((t) => (
      <div key={t.t} className={`flex ${t.w} shrink-0 items-center justify-center border-l border-[#b3b0ad] bg-white whitespace-nowrap ${t.active ? "border-b-[5px] border-b-[#397a67] pt-[5px] font-semibold tracking-[0.005em]" : "tracking-[0.016em]"}`}>{t.t}</div>
    ))}
    <div className="flex w-[48px] items-center justify-center bg-[#397a67] pb-[4px]">
      <svg width="14" height="14" viewBox="0 0 14 14"><path d="M7 0V14M0 7H14" stroke="#fff" strokeWidth="4" /></svg>
    </div>
    <svg className="mt-[14px] ml-[1292px]" width="15" height="22" viewBox="0 0 15 22"><path d="M1.500 1V17L5 13.500 8 20 10.500 19 8 12.500H13Z" fill="#fff" stroke="#111" strokeWidth="1.200" /></svg>
  </div>
);

const StatusBar = () => (
  <div className="flex h-[29px] shrink-0 items-center border-t border-[#dddbd9] bg-[#f3f2f1] text-[14px] text-[#484644]">
    <span className="mt-[3px] ml-[5px] tracking-[0.015em]">Page 4 of 5</span>
    <div className="mt-px mr-[21px] ml-auto flex items-center text-[#605e5c]">
      <svg width="160" height="18" viewBox="0 0 160 18" fill="#605e5c"><rect x="2" y="8" width="6" height="2.500" /><rect x="14" y="8.300" width="125" height="1.500" /><rect x="76" y="5" width="1.500" height="8" /><rect x="88" y="2" width="5" height="14" /><rect x="145" y="8" width="10" height="2" /><rect x="149" y="4" width="2" height="10" /></svg>
      <span className="ml-[12px] w-[52px]">163%</span>
      <svg width="22" height="16" viewBox="0 0 22 16" fill="none" stroke="#605e5c" strokeWidth="1.500"><rect x="1" y="1" width="20" height="14" /><path d="M4.500 6V3.500H7.500M14.500 3.500H17.500V6M17.500 10V12.500H14.500M7.500 12.500H4.500V10" /></svg>
    </div>
  </div>
);

const Taskbar = () => (
  <div className="flex h-[61px] shrink-0 items-start border-t border-black bg-[#eeeeee] text-[14px]">
    <div className="flex w-[1332px] pt-[10px] pl-[24px] leading-[20px]">
      <svg className="mt-[3px]" width="32" height="30" viewBox="0 0 32 30"><defs><linearGradient id="moon" x1="0" y1="0" x2="0" y2="1"><stop offset="0" stopColor="#f2c64a" /><stop offset="1" stopColor="#dc7a28" /></linearGradient></defs><path d="M20 2Q30 9 28 18T14 28Q6 27 4 19Q22 20 20 2Z" fill="url(#moon)" /><path d="M6 12Q1 12 1 8.500T6 4.500Q8 0 12 1.500T14 5Q19 5 19 8.500T15 12Z" fill="#a9c0f0" stroke="#7f9ce0" strokeWidth=".8" /><path d="M17 27Q13 27 13 23.500T18 20Q19 16 23 16.500T26 20Q31 20 31 24T27 27Z" fill="#bdd2f7" stroke="#7f9ce0" strokeWidth=".8" /></svg>
      <div className="ml-[9px]"><div className="tracking-[-0.02em] text-[#1b1b1b]">53°F</div><div className="tracking-[0.01em] text-[#5f5f5f]">Partly cloudy</div></div>
    </div>
    <svg className="mt-[16px]" width="29" height="30" viewBox="0 0 29 30"><defs><linearGradient id="win" x1="0" y1="0" x2="1" y2="1"><stop offset="0" stopColor="#74cdf6" /><stop offset="1" stopColor="#1f62c4" /></linearGradient></defs><path d="M1 0H14V14.200H0V1ZM15 0H28L29 1V14.200H15ZM0 15.400H14V29.500H1L0 28.500ZM15 15.400H29V28.500L28 29.500H15Z" fill="url(#win)" /></svg>
    <div className="mt-[11px] ml-[19px] flex h-[38px] w-[273px] items-center rounded-full border border-[#d8d8d8] bg-[#fbfbfb] pr-[8px] pl-[13px]">
      <svg width="19" height="20" viewBox="0 0 19 20" fill="none" stroke="#1f1f1f" strokeWidth="2"><circle cx="8" cy="8" r="6.800" /><path d="M12.500 13 18 18.500" strokeWidth="2.600" /></svg>
      <span className="ml-[12px] text-[16px] tracking-[0.01em] text-[#5c5c5c]">Search</span>
      <svg className="ml-auto" width="54" height="30" viewBox="0 0 54 30"><path d="M10 22 20 11 27 7 33 14 38 10 48 22Z" fill="#d8b3a6" /><path d="M27 7 33 14 29 22H24ZM38 10 43 17 38 22Z" fill="#8a7672" /><path d="M1 27Q14 19 27 23T53 26Q45 29 27 29T1 27Z" fill="#4a6b35" /><path d="M17 28Q24 21 31 22T40 28Q29 30 17 28Z" fill="#47b8e6" /><path d="M14 10V27M45 14V27M5 16V27" stroke="#7d4425" strokeWidth="1.800" /><path d="M5 6 8 12H2ZM5 10 9 18H1ZM14 1 18 9H10ZM14 7 19 16H9ZM14 13 20 21H8ZM45 3 49 11H41ZM45 9 50 18H40ZM45 15 52 23H38Z" fill="#3b6b34" /></svg>
    </div>
    <svg className="mt-[16px] ml-[16px]" width="30" height="30" viewBox="0 0 30 30"><rect x="0" y="8" width="22" height="21" rx="1" fill="#2b2b2b" /><rect x="8" y="0" width="22" height="20" rx="1" fill="#fafafa" stroke="#ddd" /><path d="M8 8H22V20H8Z" fill="#bdbdbd" /></svg>
    <svg className="mt-[15px] ml-[25px]" width="30" height="31" viewBox="0 0 30 31"><path d="M12 1H18L19 5 22 7 26 5.500 29.500 11 26.500 14V17L29.500 20 26 25.500 22 24 19 26 18 30H12L11 26 8 24 4 25.500 .5 20 3.500 17V14L.5 11 4 5.500 8 7 11 5Z" fill="#75808a" /><circle cx="15" cy="15.500" r="7" fill="#d9dde0" /><circle cx="15" cy="15.500" r="5.500" fill="#2260b5" /></svg>
    <svg className="mt-[16px] ml-[25px]" width="30" height="30" viewBox="0 0 30 30"><path d="M0 2Q0 1 1 1H10L13 5V10H0Z" fill="#d59c2c" /><rect x="0" y="5" width="30" height="23" rx="1.500" fill="#f9ce5c" /><path d="M5 28V23Q5 20 8 20H22Q25 20 25 23V28Z" fill="#2f7bd0" /><path d="M9 24H21" stroke="#164f9c" strokeWidth="1.500" /></svg>
    <div className="mt-[14px] ml-[25px] flex w-[30px] flex-col items-center">
      <svg width="30" height="31" viewBox="0 0 30 31"><defs><linearGradient id="edgeA" x1="0" y1="0" x2="1" y2=".3"><stop offset="0" stopColor="#2d9fe0" /><stop offset=".6" stopColor="#3fc4c8" /><stop offset="1" stopColor="#6bdc5f" /></linearGradient></defs><circle cx="15" cy="15.500" r="14.500" fill="#1f63b8" /><path d="M.5 15Q1 1 15 .8T30 14Q29 20 22 20Q17 20 18 17Q19 10 12 9.500T.5 15Z" fill="url(#edgeA)" /><path d="M11 14Q9 26 20 27Q25 27 28 24Q22 33 11 29T2 15Q5 9 12 9.500Q19 11 18 16Q16 11 11 14Z" fill="#2a84d2" /><path d="M18 16Q15 21 22 22.500 27 22.500 28.500 20V24Q22 28 16 24T14 13Q18 12 18 16Z" fill="#eeeeee" /></svg>
      <span className="mt-[4px] h-[4px] w-[8px] rounded-full bg-[#868686]" />
    </div>
    <svg className="mt-[15px] ml-[25px]" width="29" height="31" viewBox="0 0 29 31"><path d="M8 7V2.500Q8 1 9.500 1H20Q21.500 1 21.500 2.500V7" fill="none" stroke="#41b2e6" strokeWidth="2" /><path d="M0 6H29V26Q29 30 25 30H4Q0 30 0 26Z" fill="#20467e" /><rect x="9" y="12.500" width="5" height="5" fill="#e8553a" /><rect x="15" y="12.500" width="5" height="5" fill="#85bb3b" /><rect x="9" y="18.500" width="5" height="5" fill="#35a4ea" /><rect x="15" y="18.500" width="5" height="5" fill="#f5bb35" /></svg>
    <svg className="mt-[16px] ml-[26px]" width="30" height="29" viewBox="0 0 30 29"><path d="M6 10 17 1 30 9V25Q30 28 27 28H10Q6 28 6 24Z" fill="#2a86de" /><path d="M14 28 30 12V25Q30 28 27 28Z" fill="#65d4f7" /><path d="M17 1 30 9 16 20 6 10Z" fill="#1d55b0" opacity=".6" /><rect x="0" y="7" width="15" height="16" rx="1" fill="#1a58c0" /><ellipse cx="7.500" cy="15" rx="3.800" ry="4.500" fill="none" stroke="#fff" strokeWidth="2" /></svg>
    <div className="mt-[5px] ml-[16px] flex h-[49px] w-[48px] flex-col items-center rounded-[4px] border border-[#e2e2e2] bg-[#f8f8f8] pt-[9px]">
      <svg width="23" height="30" viewBox="0 0 23 30"><rect x="12" y="0" width="11" height="30" rx="1" fill="#c9922b" /><rect x="6.500" y="7" width="10" height="23" rx="1" fill="#e3b43c" /><rect x="0" y="15" width="10" height="15" rx="1" fill="#f2d974" /></svg>
      <span className="mt-[5px] h-[4px] w-[20px] shrink-0 rounded-full bg-[#2f70cb]" />
    </div>
    <div className="ml-auto flex pr-[24px]">
      <svg className="mt-[26px]" width="15" height="9" viewBox="0 0 15 9"><path d="M1 8 7.500 1.500 14 8" fill="none" stroke="#1b1b1b" strokeWidth="1.800" /></svg>
      <svg className="mt-[21px] ml-[21px]" width="22" height="19" viewBox="0 0 22 19"><path d="M5 16Q1 16 1 11.500T5.500 7Q7 2 11.500 2T17 7Q21 8 21 12T17 16Z" fill="#a8a8a8" stroke="#1b1b1b" strokeWidth="1.500" /><path d="M4 1 19 18" stroke="#eee" strokeWidth="3.500" /><path d="M4 1 19 18" stroke="#1b1b1b" strokeWidth="1.500" /></svg>
      <svg className="mt-[19px] ml-[19px]" width="21" height="22" viewBox="0 0 21 22" fill="none" stroke="#1b1b1b" strokeWidth="1.500"><path d="M12 2H3Q1 2 1 4V14Q1 16 3 16H13M7 16V20M12 16V20M4 20.500H14" /><rect x="14.500" y="2" width="5" height="7" rx="1" /><path d="M17 9V20" /></svg>
      <svg className="mt-[21px] ml-[9px]" width="22" height="18" viewBox="0 0 22 18" fill="none" stroke="#1b1b1b" strokeWidth="1.500"><path d="M1 6H4L9 1.500V16.500L4 12H1ZM12 6Q14 9 12 12M15 3.500Q18 9 15 14.500M18 1Q23 9 18 17" /></svg>
      <div className="mt-[10px] w-[89px] text-right leading-[20px] tracking-[0.012em] text-[#1b1b1b]"><div>8:30 PM</div><div>4/19/2025</div></div>
    </div>
  </div>
);

export default function App() {
  return (
    <div className="flex h-[2100px] w-[3360px] flex-col overflow-hidden bg-[#f3f2f1] font-['Noto_Sans',sans-serif]">
      <TitleBar />
      <Ribbon />
      <div className="flex h-[1810px] shrink-0">
        <Rail />
        <div className="flex w-[2857px] shrink-0 flex-col">
          <div className="flex h-[1766px] shrink-0">
            <Canvas />
            <Filters />
          </div>
          <TabStrip />
        </div>
        <Visualizations />
        <DataPane />
      </div>
      <StatusBar />
      <Taskbar />
    </div>
  );
}
